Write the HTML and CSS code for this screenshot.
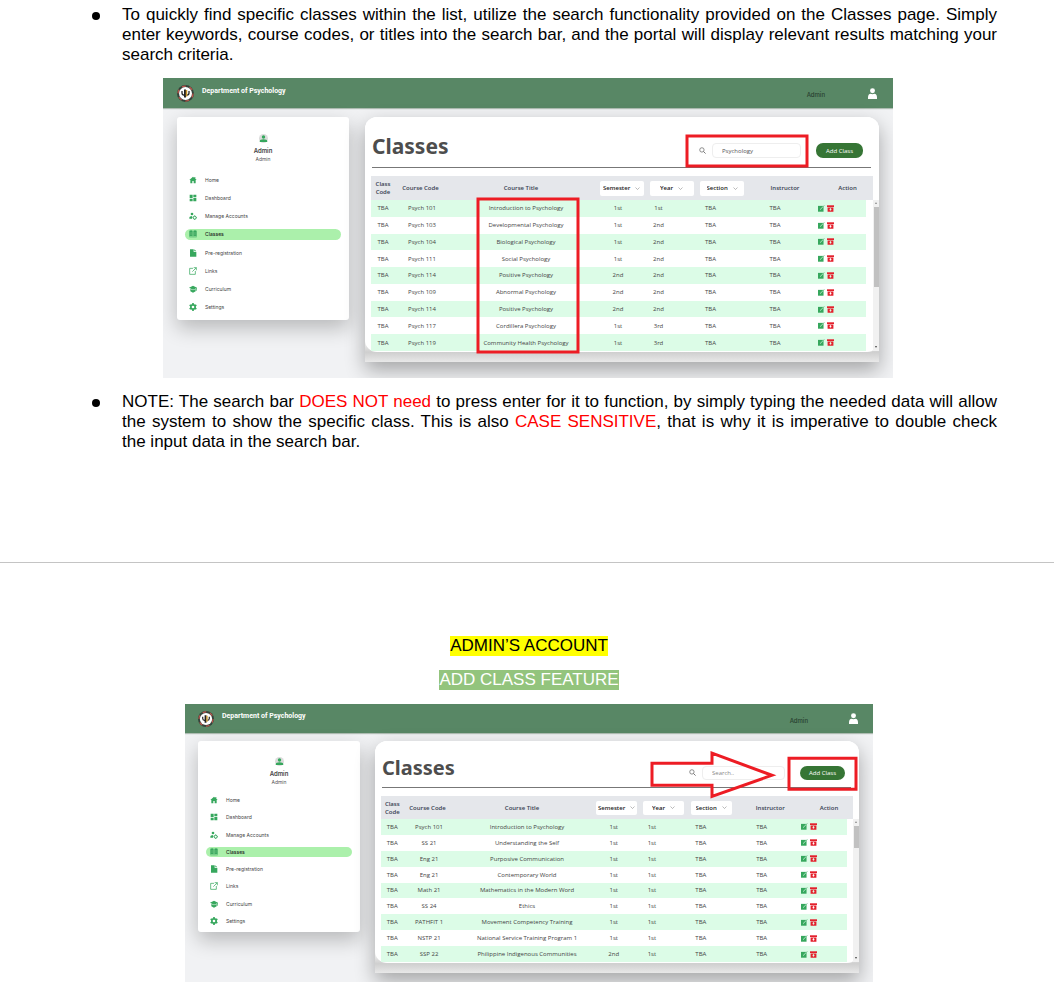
FILE: index.html
```html
<!DOCTYPE html>
<html lang="en">
<head>
<meta charset="utf-8">
<title>Classes – Admin's Account</title>
<link rel="stylesheet" href="styles.css">
</head>
<body>
<svg class="sprite" aria-hidden="true">
  <symbol id="seal" viewBox="0 0 34 34"><circle cx="17" cy="17" r="17" fill="#33423a"/><circle cx="17" cy="17" r="15" fill="none" stroke="#c0564c" stroke-width="2.500" stroke-dasharray="8 7.700"/><circle cx="17" cy="17" r="13" fill="#fff"/><path d="M10 12v4q0 4 4 4h1M24 12v4q0 4-4 4" fill="none" stroke="#222" stroke-width="2.500"/><path d="M16 9v16" stroke="#222" stroke-width="4"/><path d="M19 10v13" stroke="#c8952c" stroke-width="3"/></symbol>
  <symbol id="person" viewBox="0 0 20 24"><circle cx="10" cy="6" r="5.500" fill="#fff"/><path d="M0 24v-3q0-8 6-8.500q4 2 8 0q6 .5 6 8.500v3z" fill="#fff"/></symbol>
  <symbol id="avatar" viewBox="0 0 24 24"><circle cx="12" cy="12" r="12" fill="#dcdcdc"/><circle cx="12" cy="8" r="4.500" fill="#36a75d"/><path d="M2 21v-2q0-5 10-5t10 5v2z" fill="#36a75d"/></symbol>
  <symbol id="home" viewBox="0 0 24 24"><path d="M12 2 1 12h3v10h6v-7h4v7h6V12h3L19 8V3h-3v3z"/></symbol>
  <symbol id="dash" viewBox="0 0 24 24"><path d="M2 2h9v11H2zM13 2h9v7h-9zM2 15h9v7H2zM13 11h9v11h-9z"/></symbol>
  <symbol id="manage" viewBox="0 0 24 24"><circle cx="9" cy="6" r="4"/><path d="M1 20v-3q0-5 9-5l-1 3v5z"/><circle cx="17" cy="17" r="4.500" fill="none" stroke="currentColor" stroke-width="3"/><path d="M17 10v3M17 21v3M10 17h3M21 17h3" stroke="currentColor" stroke-width="2"/></symbol>
  <symbol id="book" viewBox="0 0 24 24"><path d="M1 2q6-3 10 0v18q-5-2-10 0zM13 2q5-3 10 0v18q-5-2-10 0z"/><path d="M5 6v10M8 6v10M16 6v10M19 6v10" fill="none" stroke="#87c98f" stroke-width="1"/><path d="M1 22h9l2 2 2-2h9" fill="none" stroke="currentColor"/></symbol>
  <symbol id="file" viewBox="0 0 24 24"><path d="M3 1h11v8h8v14H3zM16 1l6 6h-6z"/></symbol>
  <symbol id="link" viewBox="0 0 24 24"><path d="M12 4H2v18h17V12M14 2h8v8M22 2 10 14" fill="none" stroke="currentColor" stroke-width="2.200"/></symbol>
  <symbol id="cap" viewBox="0 0 24 24"><path d="M12 2 0 8.500l12 6 10-5V17h2V8.500zM4 12v7l8 4 8-4v-7l-8 4z"/></symbol>
  <symbol id="gear" viewBox="0 0 24 24"><circle cx="12" cy="12" r="6.500" fill="none" stroke="currentColor" stroke-width="5"/><path d="M12 0v5M12 19v5M2 6l4 2.500M18 15.500l4 2.500M2 18l4-2.500M18 8.500 22 6" stroke="currentColor" stroke-width="5"/></symbol>
  <symbol id="search" viewBox="0 0 24 24"><circle cx="10" cy="10" r="7.500" fill="none" stroke="#666" stroke-width="2.500"/><path d="m15.500 15.500 7 7" stroke="#666" stroke-width="3"/></symbol>
  <symbol id="chev" viewBox="0 0 10 6"><path d="m1 1 4 4 4-4" fill="none" stroke="#777" stroke-width="1"/></symbol>
  <symbol id="edit" viewBox="0 0 24 24"><path d="M0 3h19v20H0z" fill="#36a75d"/><path d="M7 16 17 6" stroke="#dcfce7" stroke-width="2.500"/><path d="m17 6 5-5" stroke="#7cc795" stroke-width="3"/></symbol>
  <symbol id="trash" viewBox="0 0 24 24"><path d="M0 1h24v6H0z" fill="#e3202c"/><path fill-rule="evenodd" d="M2 8.500h20V23H2zM10 11h4v4h3l-5 5-5-5h3z" fill="#e3202c"/></symbol>
</svg>

<main class="doc">
  <ul class="notes">
    <li>To quickly find specific classes within the list, utilize the search functionality provided on the Classes page. Simply enter keywords, course codes, or titles into the search bar, and the portal will display relevant results matching your search criteria.</li>
  </ul>

  <figure class="shot large">
    <header class="topbar">
      <svg class="seal"><use href="#seal"/></svg>
      <strong class="dept">Department of Psychology</strong>
      <span class="who">Admin</span>
      <svg class="person"><use href="#person"/></svg>
    </header>
    <div class="stage">
      <aside class="side">
        <svg class="avatar"><use href="#avatar"/></svg>
        <b class="name">Admin</b>
        <span class="role">Admin</span>
        <nav class="menu">
          <a href="#"><svg><use href="#home"/></svg>Home</a>
          <a href="#"><svg><use href="#dash"/></svg>Dashboard</a>
          <a href="#"><svg><use href="#manage"/></svg>Manage Accounts</a>
          <a href="#" class="on"><svg><use href="#book"/></svg>Classes</a>
          <a href="#"><svg><use href="#file"/></svg>Pre-registration</a>
          <a href="#"><svg><use href="#link"/></svg>Links</a>
          <a href="#"><svg><use href="#cap"/></svg>Curriculum</a>
          <a href="#"><svg><use href="#gear"/></svg>Settings</a>
        </nav>
      </aside>
      <section class="panel">
        <div class="card">
          <div class="tools">
            <h2>Classes</h2>
            <label class="find"><svg><use href="#search"/></svg><input type="text" aria-label="Search classes" value="Psychology"></label>
            <button class="add" type="button">Add Class</button>
          </div>
          <table class="list">
            <thead><tr><th>Class Code</th><th>Course Code</th><th>Course Title</th>
              <th><label class="pick"><select aria-label="Semester"><option>Semester</option></select><svg><use href="#chev"/></svg></label></th>
              <th><label class="pick"><select aria-label="Year"><option>Year</option></select><svg><use href="#chev"/></svg></label></th>
              <th><label class="pick"><select aria-label="Section"><option>Section</option></select><svg><use href="#chev"/></svg></label></th>
              <th>Instructor</th><th>Action</th></tr></thead>
            <tbody>
              <tr><td>TBA</td><td>Psych 101</td><td>Introduction to Psychology</td><td>1st</td><td>1st</td><td>TBA</td><td>TBA</td><td><svg><use href="#edit"/></svg><svg><use href="#trash"/></svg></td></tr>
              <tr><td>TBA</td><td>Psych 103</td><td>Developmental Psychology</td><td>1st</td><td>2nd</td><td>TBA</td><td>TBA</td><td><svg><use href="#edit"/></svg><svg><use href="#trash"/></svg></td></tr>
              <tr><td>TBA</td><td>Psych 104</td><td>Biological Psychology</td><td>1st</td><td>2nd</td><td>TBA</td><td>TBA</td><td><svg><use href="#edit"/></svg><svg><use href="#trash"/></svg></td></tr>
              <tr><td>TBA</td><td>Psych 111</td><td>Social Psychology</td><td>1st</td><td>2nd</td><td>TBA</td><td>TBA</td><td><svg><use href="#edit"/></svg><svg><use href="#trash"/></svg></td></tr>
              <tr><td>TBA</td><td>Psych 114</td><td>Positive Psychology</td><td>2nd</td><td>2nd</td><td>TBA</td><td>TBA</td><td><svg><use href="#edit"/></svg><svg><use href="#trash"/></svg></td></tr>
              <tr><td>TBA</td><td>Psych 109</td><td>Abnormal Psychology</td><td>2nd</td><td>2nd</td><td>TBA</td><td>TBA</td><td><svg><use href="#edit"/></svg><svg><use href="#trash"/></svg></td></tr>
              <tr><td>TBA</td><td>Psych 114</td><td>Positive Psychology</td><td>2nd</td><td>2nd</td><td>TBA</td><td>TBA</td><td><svg><use href="#edit"/></svg><svg><use href="#trash"/></svg></td></tr>
              <tr><td>TBA</td><td>Psych 117</td><td>Cordillera Psychology</td><td>1st</td><td>3rd</td><td>TBA</td><td>TBA</td><td><svg><use href="#edit"/></svg><svg><use href="#trash"/></svg></td></tr>
              <tr><td>TBA</td><td>Psych 119</td><td>Community Health Psychology</td><td>1st</td><td>3rd</td><td>TBA</td><td>TBA</td><td><svg><use href="#edit"/></svg><svg><use href="#trash"/></svg></td></tr>
            </tbody>
          </table>
          <div class="scroll"><i class="up"></i><i class="thumb"></i><i class="down"></i></div>
        </div>
      </section>
    </div>
    <svg class="marks" viewBox="0 0 730 300" preserveAspectRatio="none" aria-hidden="true"><path d="M524 58h120v30H524zM315 121h100v153H315z"/></svg>
  </figure>

  <ul class="notes">
    <li>NOTE: The search bar <em>DOES NOT need</em> to press enter for it to function, by simply typing the needed data will allow the system to show the specific class. This is also <em>CASE SENSITIVE</em>, that is why it is imperative to double check the&nbsp;input data in the search bar.</li>
  </ul>
</main>

<hr class="break">

<section class="doc second">
  <h1 class="title"><mark class="yellow">ADMIN’S ACCOUNT</mark></h1>
  <h2 class="title"><mark class="green">ADD CLASS FEATURE</mark></h2>

  <figure class="shot small">
    <header class="topbar">
      <svg class="seal"><use href="#seal"/></svg>
      <strong class="dept">Department of Psychology</strong>
      <span class="who">Admin</span>
      <svg class="person"><use href="#person"/></svg>
    </header>
    <div class="stage">
      <aside class="side">
        <svg class="avatar"><use href="#avatar"/></svg>
        <b class="name">Admin</b>
        <span class="role">Admin</span>
        <nav class="menu">
          <a href="#"><svg><use href="#home"/></svg>Home</a>
          <a href="#"><svg><use href="#dash"/></svg>Dashboard</a>
          <a href="#"><svg><use href="#manage"/></svg>Manage Accounts</a>
          <a href="#" class="on"><svg><use href="#book"/></svg>Classes</a>
          <a href="#"><svg><use href="#file"/></svg>Pre-registration</a>
          <a href="#"><svg><use href="#link"/></svg>Links</a>
          <a href="#"><svg><use href="#cap"/></svg>Curriculum</a>
          <a href="#"><svg><use href="#gear"/></svg>Settings</a>
        </nav>
      </aside>
      <section class="panel">
        <div class="card">
          <div class="tools">
            <h2>Classes</h2>
            <label class="find"><svg><use href="#search"/></svg><input type="text" aria-label="Search classes" placeholder="Search.."></label>
            <button class="add" type="button">Add Class</button>
          </div>
          <table class="list">
            <thead><tr><th>Class Code</th><th>Course Code</th><th>Course Title</th>
              <th><label class="pick"><select aria-label="Semester"><option>Semester</option></select><svg><use href="#chev"/></svg></label></th>
              <th><label class="pick"><select aria-label="Year"><option>Year</option></select><svg><use href="#chev"/></svg></label></th>
              <th><label class="pick"><select aria-label="Section"><option>Section</option></select><svg><use href="#chev"/></svg></label></th>
              <th>Instructor</th><th>Action</th></tr></thead>
            <tbody>
              <tr><td>TBA</td><td>Psych 101</td><td>Introduction to Psychology</td><td>1st</td><td>1st</td><td>TBA</td><td>TBA</td><td><svg><use href="#edit"/></svg><svg><use href="#trash"/></svg></td></tr>
              <tr><td>TBA</td><td>SS 21</td><td>Understanding the Self</td><td>1st</td><td>1st</td><td>TBA</td><td>TBA</td><td><svg><use href="#edit"/></svg><svg><use href="#trash"/></svg></td></tr>
              <tr><td>TBA</td><td>Eng 21</td><td>Purposive Communication</td><td>1st</td><td>1st</td><td>TBA</td><td>TBA</td><td><svg><use href="#edit"/></svg><svg><use href="#trash"/></svg></td></tr>
              <tr><td>TBA</td><td>Eng 21</td><td>Contemporary World</td><td>1st</td><td>1st</td><td>TBA</td><td>TBA</td><td><svg><use href="#edit"/></svg><svg><use href="#trash"/></svg></td></tr>
              <tr><td>TBA</td><td>Math 21</td><td>Mathematics in the Modern Word</td><td>1st</td><td>1st</td><td>TBA</td><td>TBA</td><td><svg><use href="#edit"/></svg><svg><use href="#trash"/></svg></td></tr>
              <tr><td>TBA</td><td>SS 24</td><td>Ethics</td><td>1st</td><td>1st</td><td>TBA</td><td>TBA</td><td><svg><use href="#edit"/></svg><svg><use href="#trash"/></svg></td></tr>
              <tr><td>TBA</td><td>PATHFIT 1</td><td>Movement Competency Training</td><td>1st</td><td>1st</td><td>TBA</td><td>TBA</td><td><svg><use href="#edit"/></svg><svg><use href="#trash"/></svg></td></tr>
              <tr><td>TBA</td><td>NSTP 21</td><td>National Service Training Program 1</td><td>1st</td><td>1st</td><td>TBA</td><td>TBA</td><td><svg><use href="#edit"/></svg><svg><use href="#trash"/></svg></td></tr>
              <tr><td>TBA</td><td>SSP 22</td><td>Philippine Indigenous Communities</td><td>2nd</td><td>1st</td><td>TBA</td><td>TBA</td><td><svg><use href="#edit"/></svg><svg><use href="#trash"/></svg></td></tr>
            </tbody>
          </table>
          <div class="scroll"><i class="up"></i><i class="thumb"></i><i class="down"></i></div>
        </div>
      </section>
    </div>
    <svg class="marks" viewBox="0 0 688 277" preserveAspectRatio="none" aria-hidden="true"><path d="M604 54h67v31H604zM467 59h60V49l60 22-60 21V81h-60z"/></svg>
  </figure>
</section>
</body>
</html>
```
FILE: styles.css
```css
* { box-sizing: border-box; }
body { margin: 0; background: #fff; color: #000; font: 17px/20px "Liberation Sans", Arial, sans-serif; }
.sprite { position: absolute; width: 0; height: 0; }
.doc { padding: 5px 57px 0 59px; }
.notes { margin: 0; padding: 0 0 0 63px; list-style: none; text-align: justify; }
.notes li { position: relative; }
.notes li::before { content: ""; position: absolute; left: -30px; top: 7px; width: 8px; height: 8px; border-radius: 50%; background: #000; }
.notes em { color: #f00; font-style: normal; }
.break { margin: 110px 0 0; border: 0; border-top: 1px solid #c4c4c4; }
.second { padding-top: 73px; padding-right: 55px; }
.title { margin: 0 0 14px; font-size: 17px; font-weight: 400; text-align: center; }
mark { display: inline-block; }
.yellow { background: #ff0; color: #000; }
.green { background: #93c47d; color: #fff; }

/* Portal window; the two sizes differ only in these measures */
.large {
  --width: 730px; --bar: 30px; --seal: 17px; --bar-left: 14px; --bar-right: 16px; --who-gap: 43px;
  --stage: 9px 14px 16px; --cols: 172fr 514fr; --gap: 16px; --side: 203px; --side-top: 17px; --menu: 139px; --menu-top: 11px; --item: 11px;
  --tools: 51px; --tools-pad: 8px; --h: 21px; --find: 89px; --box: 15px; --pick: 44px; --head: 24px; --rows: 151px; --rows-gap: 13px; --rows-pad: 28px; --thumb: 80px; --add: 47px;
}
.small {
  --width: 688px; --bar: 29px; --seal: 16px; --bar-left: 13px; --bar-right: 15px; --who-gap: 41px;
  --stage: 8px 14px 9px 13px; --cols: 162fr 484fr; --gap: 15px; --side: 191px; --side-top: 16px; --menu: 131px; --menu-top: 9px; --item: 10px;
  --tools: 47px; --tools-pad: 6px; --h: 20px; --find: 83px; --box: 14px; --pick: 41px; --head: 23px; --rows: 143px; --rows-gap: 12px; --rows-pad: 26px; --thumb: 22px; --add: 45px;
}
.shot { position: relative; width: var(--width); max-width: 100%; margin: 13px auto 14px; overflow: hidden; background: #f1f2f4; font: 6px/8px "Open Sans", "Noto Sans", sans-serif; color: #444; }
.second .shot { margin: 0 auto 6px; }
.shot svg { flex: none; }
.topbar { display: flex; align-items: center; height: var(--bar); padding: 0 var(--bar-right) 0 var(--bar-left); background: #588765; box-shadow: 0 1px 1px #aebcb2; }
.seal { width: var(--seal); height: var(--seal); }
.dept { flex: 1; margin-left: 8px; padding-bottom: 5px; color: #fff; font: 700 7px/8px Roboto, sans-serif; }
.who { margin-right: var(--who-gap); padding-top: 4px; color: #28402f; font: 500 6px/8px Inter, sans-serif; }
.person { width: 9px; height: 11px; }
.stage { display: grid; grid-template-columns: var(--cols); gap: var(--gap); align-items: start; padding: var(--stage); }
.side { display: flex; flex-direction: column; align-items: center; height: var(--side); padding: var(--side-top) 8px 0; border-radius: 3px; background: #fff; box-shadow: 0 8px 20px #0000003d; font-family: Inter, sans-serif; }
.avatar { width: 9px; height: 9px; margin-bottom: 4px; }
.name { font-weight: 600; }
.role { color: #555; font-size: 5px; }
.menu { display: flex; flex-direction: column; justify-content: space-between; align-self: stretch; height: var(--menu); margin-top: var(--menu-top); }
.menu a { display: flex; align-items: center; gap: 8px; height: var(--item); padding-left: 4px; border-radius: 6px; color: #444; font-size: 5px; text-decoration: none; }
.menu svg { width: 8px; height: 8px; color: #36a75d; fill: currentColor; }
.menu .on { background: #abf0ab; color: #222; font-weight: 500; }

.panel { padding-bottom: 10px; border-radius: 12px 12px 0 0; background: linear-gradient(#fff 90%, #cfcfcf 96%, #e8e8e8); box-shadow: 0 8px 20px #00000052; }
.card { position: relative; padding: 0 0 1px 6px; border-radius: 12px; background: #fff; }
.tools { display: flex; align-items: center; height: var(--tools); margin: 0 8px 8px 1px; padding: 17px var(--tools-pad) 0 0; border-bottom: 1px solid #777; }
.tools h2 { flex: 1; margin: 0 0 10px; color: #4d4d4d; font: 700 var(--h)/24px "Noto Sans", sans-serif; }
.find { display: flex; align-items: center; gap: 6px; }
.find svg { width: 7px; height: 7px; }
.find input { width: var(--find); height: var(--box); padding: 0 9px; border: 1px solid #eee; border-radius: 4px; background: #fff; color: #555; font: inherit; }
.find input::placeholder { color: #888; opacity: 1; }
.add { width: var(--add); height: var(--box); margin-left: 15px; padding: 0; border: 0; border-radius: 7px; background: #367535; color: #fff; font: inherit; }
.list, .list thead, .list tbody { display: block; }
.list tr { display: grid; align-items: center; }
.list th, .list td { padding: 0; text-align: center; white-space: nowrap; }
.list thead { margin-right: 6px; background: #e5e7eb; }
.list thead tr { grid-template-columns: 24fr 51fr 150fr 51fr 49fr 52fr 74fr 51fr; height: var(--head); }
.list th { color: #374151; font-weight: 600; }
.list th:first-child { white-space: normal; }
.list tbody { display: grid; grid-auto-rows: 1fr; height: var(--rows); margin-right: var(--rows-gap); }
.list tbody tr { grid-template-columns: 24fr 54fr 154fr 30fr 51fr 53fr 76fr 25fr; padding-right: var(--rows-pad); }
.list tbody tr:nth-child(odd) { background: #dcfce7; }
.list td:last-child { display: flex; justify-content: center; gap: 2px; }
.list td svg { width: 7px; height: 7px; }
.pick { display: flex; align-items: center; justify-content: center; gap: 4px; width: var(--pick); height: var(--box); margin: 0 auto; border-radius: 2px; background: #fff; }
.pick select { appearance: none; padding: 0; border: 0; background: none; color: #222; font: inherit; }
.pick svg { width: 5px; height: 3px; }
.scroll { position: absolute; right: 0; bottom: 1px; display: flex; flex-direction: column; width: 6px; height: var(--rows); background: #f1f1f1; align-items: center; }
.thumb { width: 5px; height: var(--thumb); background: #c1c1c1; }
.up, .down { width: 0; height: 0; border: 1px solid transparent; }
.up { margin: 1px 0 3px; border-bottom: 2px solid #888; }
.down { margin: auto 0 2px; border-top: 2px solid #444; }
.marks { position: absolute; inset: 0; width: 100%; height: 100%; fill: none; stroke: #ed1c24; stroke-width: 3; pointer-events: none; }
```
